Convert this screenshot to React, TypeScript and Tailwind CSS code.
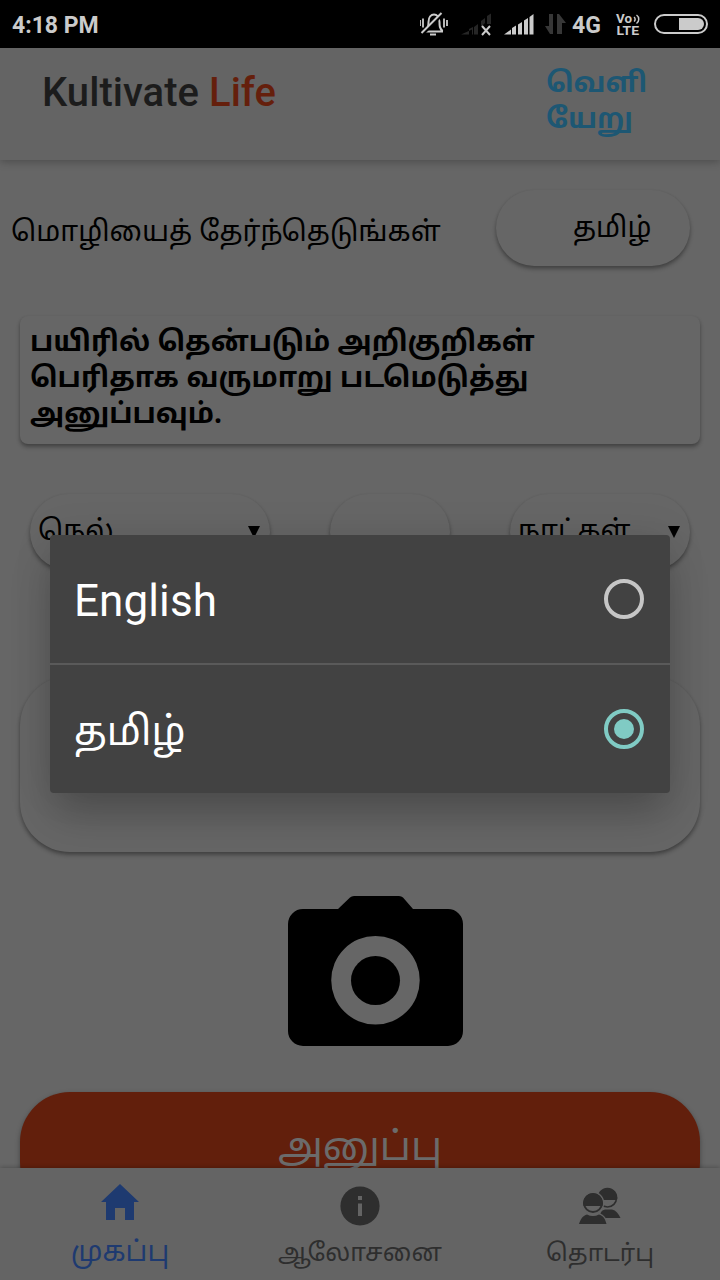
import React from "react";

const tamil = "font-['Noto_Sans_Tamil','Noto_Sans',sans-serif] whitespace-nowrap";
const raised = "bg-[#666666] shadow-[0_3px_4px_rgba(0,0,0,0.32),0_1px_3px_rgba(0,0,0,0.08)]";

function StatusIcons() {
  return (
    <svg width="300" height="48" viewBox="0 0 300 48" fill="none">
      <g stroke="#cbcbcb" strokeWidth="2">
        <path d="M4 31.500h19M6 31c2.500-3 2.500-6 2.500-9 0-10 11-10 11 0 0 4 0 6 3 9" />
        <path d="M3 34 22.500 14.500" stroke="#000" strokeWidth="2.500" />
        <path d="M1.500 33 21.500 13" />
        <path d="M0 20v6M3 18.500v9M24 18.500v9M27 20v6M10 34.500h6" strokeWidth="1.800" />
      </g>
      <g fill="#262626">
        <path d="M41 34.500h11v-5zM54 34.500h4V24l-4 3zM49 29l4-2v7.500h-4zM61 21l4-3v5l-4 4zM67 16l4-2.500V24h-4z" />
      </g>
      <path d="m62 26 8 9m0-9-8 9" stroke="#cbcbcb" strokeWidth="2" />
      <path d="M84 34.500h7v-5zM92 34.500h4V25.500l-4 2.500zM98 34.500h4V22l-4 2.500zM104 34.500h4V18l-4 2.500zM109.500 34.500h4V14l-4 3z" fill="#cbcbcb" />
      <path d="M133 14v20h-3l-5-8h4V14zM137 34V14h2l7 9h-4v11z" fill="#373737" />
      <text x="152" y="33" fontFamily="Roboto, sans-serif" fontSize="23" fontWeight="700" fill="#cbcbcb">4G</text>
      <g fill="#cbcbcb" fontFamily="Roboto, sans-serif" fontWeight="700" fontSize="12">
        <text x="196" y="23" textLength="16" lengthAdjust="spacingAndGlyphs">Vo</text>
        <text x="196.500" y="34.500" textLength="22.500" lengthAdjust="spacingAndGlyphs">LTE</text>
      </g>
      <path d="M214 17c1.500 1 1.500 3.500 0 4.500M216.500 15c3 2 3 6.500 0 8.500" stroke="#cbcbcb" strokeWidth="1.500" />
      <rect x="235" y="15" width="52" height="18" rx="9" stroke="#cbcbcb" strokeWidth="2" />
      <path d="M259 18h19a6 6 0 0 1 0 12h-19z" fill="#cbcbcb" />
    </svg>
  );
}

function Camera() {
  return (
    <svg width="176" height="150" viewBox="0 0 176 150" className="ml-[288px] mt-11 shrink-0">
      <path
        fill="#000"
        fillRule="evenodd"
        d="M50 13 62 1.500Q63.500 0 66 0h45q2.500 0 4 1.500L125 13h35a15 15 0 0 1 15 15v107a15 15 0 0 1-15 15H15a15 15 0 0 1-15-15V28a15 15 0 0 1 15-15zM87.500 40a44 44 0 1 0 0 88.500a44 44 0 0 0 0-88.500z"
      />
      <circle cx="87.500" cy="84.500" r="24.500" fill="#000" />
    </svg>
  );
}

function People() {
  return (
    <svg width="44" height="38" viewBox="0 0 44 38">
      <circle cx="29.500" cy="12" r="9" fill="none" stroke="#2e2e2e" strokeWidth="1.600" />
      <path d="M20 14a9.800 9.800 0 1 1 19 0z" fill="#2e2e2e" />
      <path d="M22 32c0-5 1-7.500 5-8.500h7c4 1 6.500 4 8.500 8.500z" fill="#2e2e2e" />
      <circle cx="15" cy="17" r="11.300" fill="#646464" />
      <path d="M0 38c3-8 5-10.500 10-11.500h9c5 1 9 4 11.500 11.500z" fill="#646464" />
      <circle cx="15" cy="17" r="9" fill="none" stroke="#2e2e2e" strokeWidth="1.800" />
      <path d="M5.500 20a9.900 9.900 0 1 1 19 0z" fill="#2e2e2e" />
      <path d="M1 38c2-5.500 4-8.500 8-9.500 4 2 8 2 12 0 4 1 6 4 7.500 9.500z" fill="#2e2e2e" />
    </svg>
  );
}

export default function App() {
  return (
    <div className="relative flex h-[1280px] w-[720px] flex-col overflow-hidden bg-[#666666] font-[Roboto,sans-serif] text-black">
      <div className="flex h-12 shrink-0 items-center justify-between bg-black pl-3">
        <span className="pt-1 text-[23px] font-bold leading-[44px] text-[#cbcbcb]">4:18 PM</span>
        <StatusIcons />
      </div>

      <header className="flex h-28 shrink-0 justify-between bg-[#646464] pl-[42px] pr-[73px] shadow-[0_2px_8px_rgba(0,0,0,0.25)]">
        <h1 className="pt-[21px] text-[40px] font-medium leading-[48px] tracking-[0.04px] text-[#1c1c1c]">
          Kultivate <span className="text-[#651f0c]">Life</span>
        </h1>
        <div className={`${tamil} w-[101px] pt-[19px] text-[28px] font-bold leading-9 text-[#1d5773]`}>
          <div>வெளி</div>
          <div>யேறு</div>
        </div>
      </header>

      <main className="flex min-h-0 flex-1 flex-col">
        <div className="mt-[30px] flex h-[76px] shrink-0 items-center justify-between pl-[11px] pr-[30px]">
          <span className={`${tamil} pt-3 text-[28px] leading-10`}>மொழியைத் தேர்ந்தெடுங்கள்</span>
          <div className={`${tamil} ${raised} flex h-[76px] w-[194px] items-center rounded-full pl-[77px] pt-1 text-[28px]`}>
            தமிழ்
          </div>
        </div>

        <div className={`${tamil} ${raised} mx-5 mt-[50px] h-32 shrink-0 rounded-lg px-[10px] pt-[10px] text-[28px] font-bold leading-9`}>
          <div>பயிரில் தென்படும் அறிகுறிகள்</div>
          <div className="tracking-[0.15px]">பெரிதாக வருமாறு படமெடுத்து</div>
          <div>அனுப்பவும்.</div>
        </div>

        <div className="mt-[50px] flex shrink-0 justify-between px-[30px]">
          <div className={`${raised} flex h-[76px] w-[240px] justify-between rounded-full pl-2 pr-[10px]`}>
            <span className={`${tamil} pt-[2px] text-[28px] leading-[74px]`}>நெல்</span>
            <svg width="12" height="12" viewBox="0 0 12 12" className="mt-8"><path d="M0 0h12L6 12z" /></svg>
          </div>
          <div className={`${raised} h-[76px] w-[120px] rounded-full`} />
          <div className={`${raised} flex h-[76px] w-[180px] justify-between rounded-full pl-2 pr-[10px]`}>
            <span className={`${tamil} pt-[2px] text-[28px] leading-[74px]`}>நாட்கள்</span>
            <svg width="12" height="12" viewBox="0 0 12 12" className="mt-8"><path d="M0 0h12L6 12z" /></svg>
          </div>
        </div>

        <div className={`${raised} mx-5 mt-[106px] h-[176px] shrink-0 rounded-[50px]`} />
        <Camera />
        <button className={`${tamil} mx-5 mt-[46px] h-[120px] shrink-0 rounded-[50px] bg-[#621f0c] text-[40px] leading-[116px] text-[#6b6b6b] shadow-[0_2px_5px_rgba(0,0,0,0.35)]`}>
          <span className="block h-[120px]">அனுப்பு</span>
        </button>
      </main>

      <nav className="absolute inset-x-0 bottom-0 grid h-28 grid-cols-3 bg-[#646464] shadow-[0_-1px_4px_rgba(0,0,0,0.22)]">
        <div className="flex flex-col items-center pt-4 text-[#1e3a70]">
          <svg width="38" height="36" viewBox="0 0 38 36"><path d="M19 0 38 18h-5v18h-9V24H14v12H5V18H0z" fill="currentColor" /></svg>
          <span className={`${tamil} mt-[14px] text-[28px] leading-[40px]`}>முகப்பு</span>
        </div>
        <div className="flex flex-col items-center pt-[18px] text-[#2e2e2e]">
          <svg width="40" height="40" viewBox="0 0 40 40">
            <circle cx="20" cy="20" r="19.600" fill="currentColor" />
            <path d="M18 10h4v4h-4zM18 17.500h4V30h-4z" fill="#646464" />
          </svg>
          <span className={`${tamil} mt-[9px] text-[24.700px] leading-[40px]`}>ஆலோசனை</span>
        </div>
        <div className="flex flex-col items-center pt-[18px] text-[#2e2e2e]">
          <People />
          <span className={`${tamil} mt-[11px] text-[24.100px] leading-[40px]`}>தொடர்பு</span>
        </div>
      </nav>

      <div className="absolute left-[50px] top-[535px] flex h-[258px] w-[620px] flex-col rounded-[4px] bg-[#424242] text-[44px] text-white shadow-[0_24px_40px_-4px_rgba(0,0,0,0.24),0_0_40px_rgba(0,0,0,0.08)]">
        <div className="flex h-[130px] items-center justify-between border-b-2 border-[#5a5a5a] pl-6 pr-[26px]">
          <span className="pt-1 tracking-[0.1px]">English</span>
          <span className="h-10 w-10 rounded-full border-4 border-[#c6c6c6]" />
        </div>
        <div className="flex h-[128px] items-center justify-between pl-6 pr-[26px]">
          <span className={`${tamil} pt-[13px] text-[39.800px]`}>தமிழ்</span>
          <span className="flex h-10 w-10 items-center justify-center rounded-full border-4 border-[#80cbc4]">
            <span className="h-5 w-5 rounded-full bg-[#80cbc4]" />
          </span>
        </div>
      </div>
    </div>
  );
}
